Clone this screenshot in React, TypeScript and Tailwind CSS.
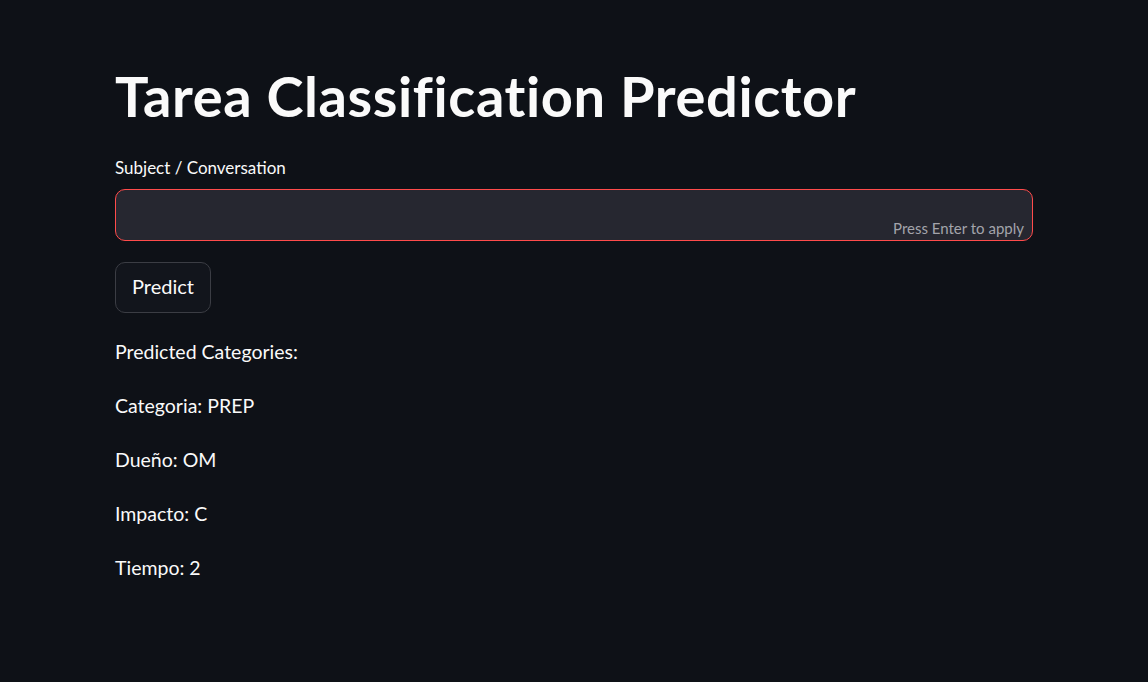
import React from "react";

export default function App() {
  const font = { fontFamily: '"Lato", "Liberation Sans", sans-serif' };
  return (
    <div className="min-h-[682px] w-full bg-[#0e1117] text-[#fafafa]" style={font}>
      <div className="mx-auto flex w-[918px] flex-col pt-[63px]">
        <h1 className="text-[56px] font-bold leading-[66px] tracking-[0.6px]">Tarea Classification Predictor</h1>
        <label className="mt-[28px] text-[17px] leading-[22px]">Subject / Conversation</label>
        <div className="mt-[10px] flex h-[52px] items-end justify-end rounded-[10px] border border-[#ff4b4b] bg-[#262730] px-[8px] pb-[3px]">
          <span className="text-[15px] leading-[18px] text-[#a3a4ab]">Press Enter to apply</span>
        </div>
        <div className="mt-[21px]">
          <button className="h-[51px] rounded-[10px] border border-[#3b3d44] bg-[#12151c] px-[16px] pb-[3px] text-[20px] text-[#fafafa]">
            Predict
          </button>
        </div>
        <div className="mt-[12px] flex flex-col text-[19.5px]">
          <p className="leading-[54px]">Predicted Categories:</p>
          <p className="leading-[54px]">Categoria: PREP</p>
          <p className="leading-[54px]">Dueño: OM</p>
          <p className="leading-[54px]">Impacto: C</p>
          <p className="leading-[54px]">Tiempo: 2</p>
        </div>
      </div>
    </div>
  );
}
